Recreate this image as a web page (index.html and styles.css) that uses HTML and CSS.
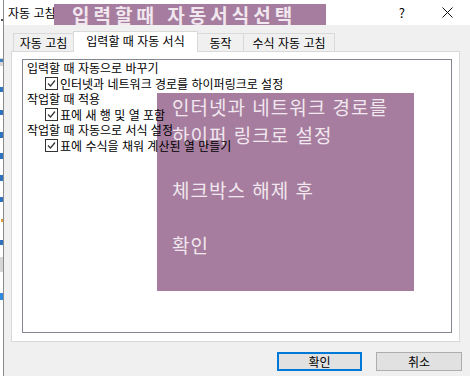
FILE: index.html
```html
<!DOCTYPE html>
<html lang="ko">
<head>
    <meta charset="UTF-8">
    <title>자동 고침</title>
    <link rel="stylesheet" href="styles.css">
</head>
<body>
    <div class="screen">
        <!-- 뒤에 있는 창의 가장자리 -->
        <svg class="backdrop" width="3" height="376" viewBox="0 0 3 376">
            <rect x="0" y="0" width="3" height="376" fill="#fff"/>
            <rect x="1" y="19" width="2" height="2" fill="#555"/>
            <rect x="0" y="58" width="3" height="8" fill="#d6d6d6"/>
            <rect x="0" y="59" width="3" height="3" fill="#3b7fc4"/>
            <rect x="0" y="87" width="3" height="5" fill="#2f73c0"/>
            <rect x="0" y="110" width="3" height="5" fill="#2f73c0"/>
            <rect x="0" y="132" width="3" height="6" fill="#2f73c0"/>
            <rect x="0" y="153" width="3" height="6" fill="#2f73c0"/>
            <rect x="0" y="175" width="3" height="6" fill="#2f73c0"/>
            <rect x="0" y="197" width="3" height="5" fill="#2f73c0"/>
            <rect x="1" y="219" width="2" height="3" fill="#e59a2f"/>
            <rect x="0" y="240" width="3" height="5" fill="#2f73c0"/>
            <rect x="0" y="257" width="3" height="15" fill="#d6d6d6"/>
            <rect x="0" y="293" width="3" height="7" fill="#2f8ae0"/>
        </svg>

        <div class="dialog">
            <div class="titlebar">
                <span class="title">자동 고침</span>
                <span class="help">?</span>
                <svg class="close" width="11" height="11" viewBox="0 0 11 11">
                    <path d="M0.5 0.5 L10.5 10.5 M10.5 0.5 L0.5 10.5" stroke="#111" stroke-width="1"/>
                </svg>
            </div>

            <div class="content">
                <div class="tabs">
                    <div class="tab first">자동 고침</div>
                    <div class="tab active">입력할 때 자동 서식</div>
                    <div class="tab">동작</div>
                    <div class="tab">수식 자동 고침</div>
                </div>

                <div class="panel">
                    <div class="listbox">
                        <div class="group">입력할 때 자동으로 바꾸기</div>
                        <div class="option">
                            <svg class="check" width="13" height="13" viewBox="0 0 13 13"><rect x="0.5" y="0.5" width="12" height="12" fill="#fff" stroke="#333"/><path d="M3 6.5 L5.5 9 L10 3.5" fill="none" stroke="#333" stroke-width="1.2"/></svg>
                            <span class="label">인터넷과 네트워크 경로를 하이퍼링크로 설정</span>
                        </div>
                        <div class="group">작업할 때 적용</div>
                        <div class="option">
                            <svg class="check" width="13" height="13" viewBox="0 0 13 13"><rect x="0.5" y="0.5" width="12" height="12" fill="#fff" stroke="#333"/><path d="M3 6.5 L5.5 9 L10 3.5" fill="none" stroke="#333" stroke-width="1.2"/></svg>
                            <span class="label">표에 새 행 및 열 포함</span>
                        </div>
                        <div class="group">작업할 때 자동으로 서식 설정</div>
                        <div class="option">
                            <svg class="check" width="13" height="13" viewBox="0 0 13 13"><rect x="0.5" y="0.5" width="12" height="12" fill="#fff" stroke="#333"/><path d="M3 6.5 L5.5 9 L10 3.5" fill="none" stroke="#333" stroke-width="1.2"/></svg>
                            <span class="label">표에 수식을 채워 계산된 열 만들기</span>
                        </div>
                    </div>
                </div>

                <div class="buttons">
                    <button class="btn default">확인</button>
                    <button class="btn">취소</button>
                </div>
            </div>
        </div>

        <!-- 설명 메모 -->
        <div class="note note-title">입력할때 자동서식선택</div>
        <div class="note note-body">인터넷과 네트워크 경로를<br>하이퍼 링크로 설정<br><br>체크박스 해제 후<br><br>확인</div>
    </div>
</body>
</html>
```

FILE: styles.css
```css
body {
    margin: 0;
    font-family: "Noto Sans CJK KR", "Noto Sans", sans-serif;
    font-size: 12px;
    color: #000;
    overflow: hidden;
}

.screen {
    position: relative;
    display: flex;
    width: 470px;
    height: 376px;
}

.backdrop {
    flex: none;
    display: block;
}

.dialog {
    flex: 1;
    display: flex;
    flex-direction: column;
    border-left: 1px solid #8c8c8c;
    background: #f0f0f0;
}

/* 제목 표시줄 */
.titlebar {
    height: 25px;
    display: flex;
    align-items: center;
    background: #fff;
    padding-left: 4px;
}

.title {
    line-height: 25px;
}

.help {
    margin-left: auto;
    margin-right: 37px;
    font-size: 13px;
}

.close {
    display: block;
    margin-right: 17px;
}

.content {
    flex: 1;
    display: flex;
    flex-direction: column;
    padding: 6px 10px 0 7px;
}

/* 탭 */
.tabs {
    display: flex;
    align-items: flex-end;
    height: 20px;
    padding-left: 2px;
}

.tab {
    box-sizing: border-box;
    height: 18px;
    line-height: 17px;
    text-align: center;
    border-top: 1px solid #d9d9d9;
    border-right: 1px solid #d9d9d9;
    background: #f0f0f0;
}

.tab:nth-child(1) { width: 60px; border-left: 1px solid #d9d9d9; border-right: none; }
.tab:nth-child(2) { width: 125px; }
.tab:nth-child(3) { width: 46px; }
.tab:nth-child(4) { width: 91px; }

.tab.active {
    position: relative;
    z-index: 1;
    height: 21px;
    line-height: 18px;
    margin-bottom: -1px;
    background: #fff;
    border-left: 1px solid #d9d9d9;
}

.panel {
    box-sizing: border-box;
    width: 449px;
    height: 291px;
    padding: 7px 7px 8px 10px;
    background: #fff;
    border: 1px solid #d9d9d9;
}

.listbox {
    box-sizing: border-box;
    height: 100%;
    border: 1px solid #828790;
    background: #fff;
}

.group,
.option {
    position: relative;
    z-index: 2;
    height: 15.5px;
    line-height: 15.5px;
    white-space: nowrap;
}

.group {
    padding-left: 4px;
}

.option {
    display: flex;
    align-items: center;
    padding-left: 22px;
}

.check {
    flex: none;
    display: block;
    margin-right: 2px;
}

/* 버튼 */
.buttons {
    display: flex;
    justify-content: flex-end;
    gap: 14px;
    margin-top: 10px;
    margin-right: -2px;
}

.btn {
    box-sizing: border-box;
    width: 86px;
    height: 19px;
    padding: 0;
    font-family: inherit;
    font-size: 12px;
    line-height: 15px;
    color: #000;
    background: #e1e1e1;
    border: 1px solid #adadad;
}

.btn.default {
    width: 85px;
    border: 2px solid #0078d7;
}

/* 설명 메모 */
.note {
    position: absolute;
    box-sizing: border-box;
    background: #a67d9e;
    color: #f1e7ef;
    white-space: nowrap;
}

.note-title {
    left: 54px;
    top: 4px;
    width: 272px;
    height: 21px;
    padding-left: 18px;
    font-size: 19px;
    font-weight: bold;
    letter-spacing: 4px;
    line-height: 21px;
}

.note-body {
    z-index: 1;
    left: 157px;
    top: 93px;
    width: 257px;
    height: 198px;
    padding-left: 15px;
    font-size: 19px;
    letter-spacing: 1px;
    line-height: 27.5px;
}
```
